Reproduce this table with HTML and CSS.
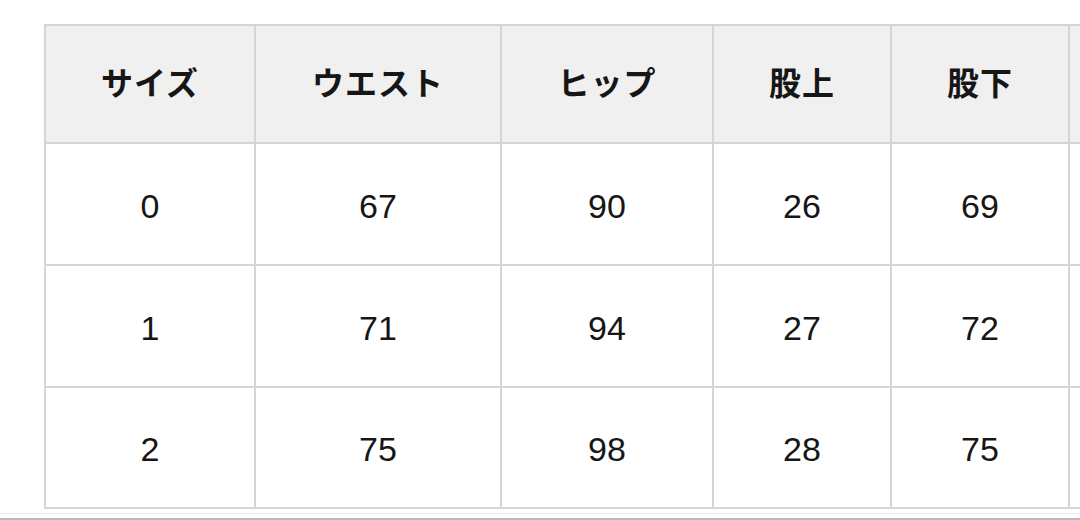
FILE: index.html
```html
<!DOCTYPE html>
<html lang="ja">
<head>
<meta charset="utf-8">
<link rel="stylesheet" href="styles.css">
</head>
<body>
<div class="page">
  <div class="wrap">
    <table class="size-table">
      <thead>
        <tr>
          <th class="c1">サイズ</th>
          <th class="c2">ウエスト</th>
          <th class="c3">ヒップ</th>
          <th class="c4">股上</th>
          <th class="c5">股下</th>
          <th class="c6"></th>
        </tr>
      </thead>
      <tbody>
        <tr class="r1"><td>0</td><td>67</td><td>90</td><td>26</td><td>69</td><td></td></tr>
        <tr class="r2"><td>1</td><td>71</td><td>94</td><td>27</td><td>72</td><td></td></tr>
        <tr class="r3"><td>2</td><td>75</td><td>98</td><td>28</td><td>75</td><td></td></tr>
      </tbody>
    </table>
  </div>
  <div class="footer"></div>
</div>
</body>
</html>
```

FILE: styles.css
```css
html, body {
  margin: 0;
  padding: 0;
  background: #ffffff;
}
.page {
  width: 1080px;
  height: 520px;
  overflow: hidden;
}
.wrap {
  padding: 24px 0 0 44px;
  width: 1036px;
  overflow: hidden;
}
.size-table {
  border-collapse: separate;
  border-spacing: 0;
  table-layout: fixed;
  width: 1204px;
  border-top: 2px solid #d5d5d5;
  border-left: 2px solid #d5d5d5;
  font-family: "Liberation Sans", "Noto Sans CJK JP", sans-serif;
  color: #161616;
}
.size-table th,
.size-table td {
  box-sizing: border-box;
  border-right: 2px solid #d5d5d5;
  border-bottom: 2px solid #d5d5d5;
  text-align: center;
  vertical-align: middle;
  padding: 0;
}
.size-table th {
  background: #f0f0f0;
  height: 118px;
  font-family: "Noto Sans CJK JP", sans-serif;
  font-weight: 700;
  font-size: 32px;
  letter-spacing: 1px;
  padding-bottom: 6px;
}
.size-table td {
  height: 122px;
  font-size: 34px;
  font-weight: 400;
  padding-top: 4px;
}
.size-table tr.r3 td {
  height: 121px;
}
.c1 { width: 210px; }
.c2 { width: 246px; }
.c3 { width: 212px; }
.c4 { width: 178px; }
.c5 { width: 178px; }
.c6 { width: 178px; }
.footer {
  margin-top: 4px;
  height: 4px;
  border-top: 1px solid #ececec;
  border-bottom: 2px solid #b9b9b9;
}
```
